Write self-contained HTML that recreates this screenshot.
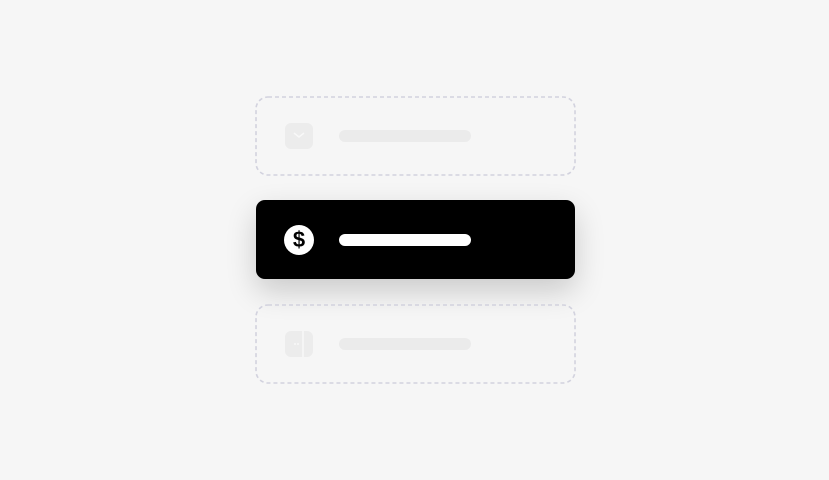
<!DOCTYPE html>
<html><head><style>
body{margin:0;width:829px;height:480px;background:#f6f6f6;position:relative;overflow:hidden;font-family:"Liberation Sans",sans-serif}
.box{position:absolute;left:255px;width:321px;height:80px}
.bar{position:absolute;left:339px;width:132px;height:12px;border-radius:6px;background:#ebebeb}
.ic{position:absolute;left:285px;width:28px;height:26px;border-radius:6px;background:#ececec}
</style></head><body>
<svg class="box" style="top:96px" width="321" height="80"><rect x="1" y="1" width="319" height="78" rx="12" fill="none" stroke="#d2d2de" stroke-width="1.6" stroke-dasharray="4 3"/></svg>
<div class="ic" style="top:123px"><svg width="28" height="26"><path d="M9 10 L14 14 L19 10" stroke="#f8f8f8" stroke-width="1.5" fill="none"/></svg></div>
<div class="bar" style="top:130px"></div>
<div style="position:absolute;left:256px;top:200px;width:319px;height:79px;background:#000;border-radius:9px;box-shadow:0 12px 30px rgba(0,0,0,0.18)"></div>
<div style="position:absolute;left:284px;top:225px;width:30px;height:30px;border-radius:50%;background:#fff;color:#000;font-weight:bold;font-size:22px;line-height:30px;text-align:center">$</div>
<div class="bar" style="top:234px;background:#fff"></div>
<svg class="box" style="top:304px" width="321" height="80"><rect x="1" y="1" width="319" height="78" rx="12" fill="none" stroke="#d2d2de" stroke-width="1.6" stroke-dasharray="4 3"/></svg>
<div class="ic" style="top:331px"><svg width="28" height="26"><line x1="18" y1="0" x2="18" y2="26" stroke="#f8f8f8" stroke-width="1.5"/><circle cx="10" cy="13" r="1" fill="#f8f8f8"/><circle cx="13" cy="13" r="1" fill="#f8f8f8"/></svg></div>
<div class="bar" style="top:338px"></div>
</body></html>
